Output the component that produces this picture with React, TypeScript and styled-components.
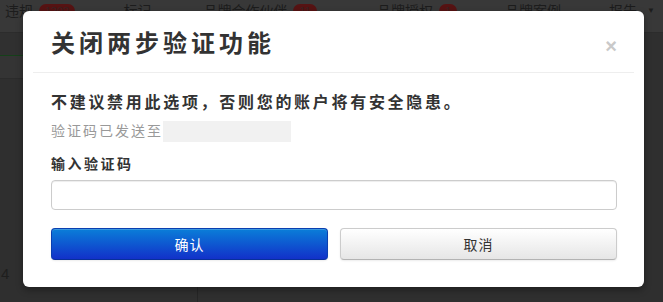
import React from "react";
import styled, { createGlobalStyle } from "styled-components";

const GlobalStyle = createGlobalStyle`
  html, body {
    margin: 0;
    padding: 0;
    background: #2f2f2f;
  }
  body {
    font-family: "Liberation Sans", "Noto Sans CJK SC", sans-serif;
  }
`;

const navItems = [
  { label: "违规", badge: "1202", gap: 48 },
  { label: "标记", gap: 52 },
  { label: "品牌合作伙伴", badge: "11", gap: 60 },
  { label: "品牌授权", badge: "1", gap: 48 },
  { label: "品牌案例", gap: 48 },
  { label: "报告", caret: true, gap: 0 },
];

const App = () => {
  return (
    <Page>
      <GlobalStyle />
      <NavBar>
        {navItems.map((item) => (
          <NavItem key={item.label} gap={item.gap}>
            {item.label}
            {item.badge && <Badge>{item.badge}</Badge>}
            {item.caret && <Caret>▼</Caret>}
          </NavItem>
        ))}
      </NavBar>
      <Content>
        <SideColumn>
          <SideRow />
          <SideRow active />
          <SideSpacer />
          <SideNumber>4</SideNumber>
        </SideColumn>
        <MainColumn />
      </Content>

      <Modal>
        <Header>
          <Title>关闭两步验证功能</Title>
          <Close>×</Close>
        </Header>
        <Body>
          <Warning>不建议禁用此选项，否则您的账户将有安全隐患。</Warning>
          <SentLine>
            验证码已发送至
            <Masked />
          </SentLine>
          <Label>输入验证码</Label>
          <CodeInput type="text" />
          <Actions>
            <Button primary>确认</Button>
            <Button>取消</Button>
          </Actions>
        </Body>
      </Modal>
    </Page>
  );
};

const Page = styled.div`
  position: relative;
  width: 663px;
  height: 302px;
  overflow: hidden;
  background: #2f2f2f;
`;

const NavBar = styled.div`
  display: flex;
  align-items: flex-start;
  height: 33px;
  padding: 3px 0 0 5px;
  box-sizing: border-box;
  background: #383838;
  border-bottom: 1px solid #2c2c2c;
`;

const NavItem = styled.div<{ gap: number }>`
  display: flex;
  align-items: center;
  gap: 6px;
  margin-right: ${({ gap }) => gap}px;
  font-size: 14px;
  line-height: 16px;
  color: #1c1c1c;
  white-space: nowrap;
`;

const Badge = styled.span`
  padding: 0 6px;
  border-radius: 8px;
  background: #561313;
  color: #3a2222;
  font-size: 11px;
  line-height: 14px;
`;

const Caret = styled.span`
  margin-left: 4px;
  font-size: 8px;
  color: #1c1c1c;
`;

const Content = styled.div`
  display: flex;
  height: 269px;
`;

const SideColumn = styled.div`
  display: flex;
  flex-direction: column;
  width: 197px;
  border-right: 1px solid #262626;
`;

const SideRow = styled.div<{ active?: boolean }>`
  height: 22px;
  background: ${({ active }) => (active ? "#343434" : "#303030")};
  border-bottom: 1px solid ${({ active }) => (active ? "#2b2b2b" : "#16401a")};
`;

const SideSpacer = styled.div`
  flex: 1;
`;

const SideNumber = styled.div`
  padding: 0 0 20px 1px;
  font-size: 15px;
  color: #1e1e1e;
`;

const MainColumn = styled.div`
  flex: 1;
`;

const Modal = styled.div`
  position: absolute;
  left: 23px;
  top: 11px;
  width: 621px;
  height: 276px;
  display: flex;
  flex-direction: column;
  background: #fff;
  border-radius: 6px;
  box-shadow: 0 3px 7px rgba(0, 0, 0, 0.35);
`;

const Header = styled.div`
  display: flex;
  align-items: center;
  justify-content: space-between;
  margin: 0 10px;
  padding: 18px 17px 13px 18px;
  border-bottom: 1px solid #eeeeee;
`;

const Title = styled.h3`
  margin: 0;
  font-size: 24px;
  line-height: 30px;
  font-weight: bold;
  letter-spacing: 4px;
  color: #333;
`;

const Close = styled.span`
  font-size: 20px;
  line-height: 20px;
  font-weight: bold;
  color: #c9c9c9;
  margin-top: 4px;
`;

const Body = styled.div`
  display: flex;
  flex-direction: column;
  padding: 19px 27px 27px 28px;
`;

const Warning = styled.p`
  margin: 0;
  font-size: 16px;
  line-height: 22px;
  font-weight: bold;
  letter-spacing: 2.7px;
  color: #333;
`;

const SentLine = styled.p`
  display: flex;
  align-items: center;
  margin: 6px 0 0;
  font-size: 14px;
  line-height: 22px;
  letter-spacing: 2px;
  color: #999;
`;

const Masked = styled.span`
  display: inline-block;
  width: 128px;
  height: 21px;
  background: #f1f1f1;
`;

const Label = styled.label`
  margin-top: 11px;
  font-size: 14px;
  line-height: 22px;
  font-weight: bold;
  letter-spacing: 2.5px;
  color: #333;
`;

const CodeInput = styled.input`
  margin-top: 5px;
  height: 30px;
  box-sizing: border-box;
  border: 1px solid #cccccc;
  border-radius: 4px;
  box-shadow: inset 0 1px 1px rgba(0, 0, 0, 0.075);
  padding: 4px 6px;
  font-size: 14px;
  outline: none;
`;

const Actions = styled.div`
  display: grid;
  grid-template-columns: 1fr 1fr;
  gap: 12px;
  margin-top: 18px;
`;

const Button = styled.button<{ primary?: boolean }>`
  height: 32px;
  border-radius: 4px;
  font-family: inherit;
  font-size: 14px;
  letter-spacing: 1px;
  cursor: pointer;
  border: 1px solid ${({ primary }) => (primary ? "#0a3fb0" : "#cccccc")};
  border-bottom-color: ${({ primary }) => (primary ? "#08309a" : "#b3b3b3")};
  color: ${({ primary }) => (primary ? "#ffffff" : "#333333")};
  background: ${({ primary }) =>
    primary
      ? "linear-gradient(to bottom, #0a7ed8, #1231c9)"
      : "linear-gradient(to bottom, #ffffff, #e6e6e6)"};
  box-shadow: inset 0 1px 0 rgba(255, 255, 255, 0.2), 0 1px 2px rgba(0, 0, 0, 0.08);
`;

export default App;
